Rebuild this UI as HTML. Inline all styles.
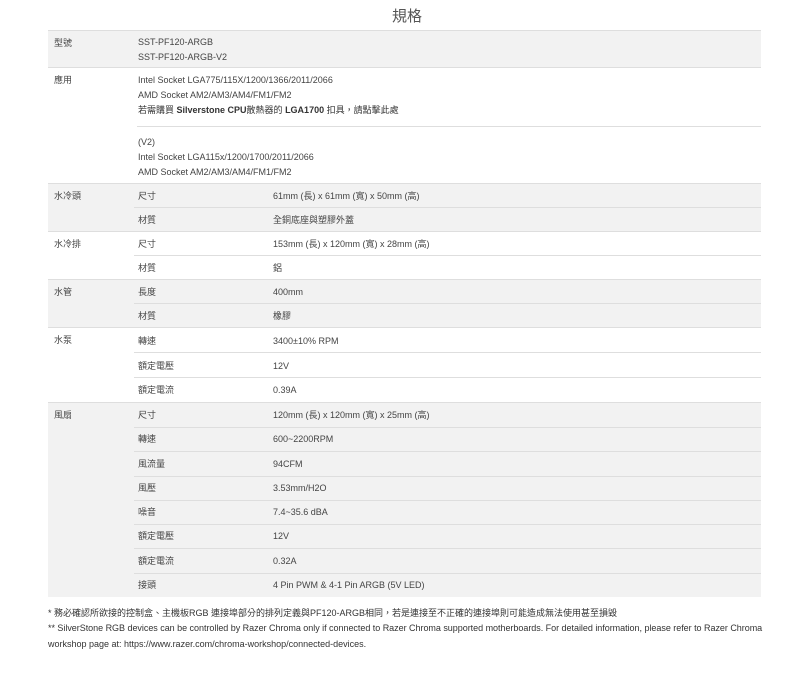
<!DOCTYPE html>
<html><head><meta charset="utf-8">
<style>
*{margin:0;padding:0;box-sizing:border-box}
body{width:800px;height:674px;background:#fff;font-family:"Liberation Sans","Noto Sans CJK TC",sans-serif;color:#444;font-size:9px;position:relative;overflow:hidden}
.a{position:absolute;white-space:nowrap;line-height:11px}
.g{position:absolute;left:48px;width:713px;background:#f2f2f2}
.l{position:absolute;height:1px;background:#dedede}
b{font-weight:bold;color:#333}
</style></head><body>
<div class="a" style="left:392px;top:8px;font-size:15px;line-height:18px;color:#555">規格</div>

<div class="l" style="left:48px;top:30px;width:713px"></div>
<div class="g" style="top:31px;height:36px"></div>
<div class="l" style="left:48px;top:67px;width:713px"></div>
<div class="a" style="left:54px;top:38px">型號</div>
<div class="a" style="left:138px;top:37px">SST-PF120-ARGB</div>
<div class="a" style="left:138px;top:52px">SST-PF120-ARGB-V2</div>

<div class="a" style="left:54px;top:75px">應用</div>
<div class="a" style="left:138px;top:75px">Intel Socket LGA775/115X/1200/1366/2011/2066</div>
<div class="a" style="left:138px;top:90px">AMD Socket AM2/AM3/AM4/FM1/FM2</div>
<div class="a" style="left:138px;top:105px;color:#333">若需購買 <b>Silverstone CPU</b>散熱器的 <b>LGA1700</b> 扣具，請點擊此處</div>
<div class="l" style="left:137px;top:126px;width:624px"></div>
<div class="a" style="left:138px;top:137px">(V2)</div>
<div class="a" style="left:138px;top:152px">Intel Socket LGA115x/1200/1700/2011/2066</div>
<div class="a" style="left:138px;top:167px">AMD Socket AM2/AM3/AM4/FM1/FM2</div>

<div class="l" style="left:48px;top:183px;width:713px"></div>
<div class="g" style="top:184px;height:47px"></div>
<div class="l" style="left:134px;top:207px;width:627px"></div>
<div class="a" style="left:54px;top:191px">水冷頭</div>
<div class="a" style="left:138px;top:191px">尺寸</div><div class="a" style="left:273px;top:191px">61mm (長) x 61mm (寬) x 50mm (高)</div>
<div class="a" style="left:138px;top:215px">材質</div><div class="a" style="left:273px;top:215px">全銅底座與塑膠外蓋</div>

<div class="l" style="left:48px;top:231px;width:713px"></div>
<div class="l" style="left:134px;top:255px;width:627px"></div>
<div class="a" style="left:54px;top:239px">水冷排</div>
<div class="a" style="left:138px;top:239px">尺寸</div><div class="a" style="left:273px;top:239px">153mm (長) x 120mm (寬) x 28mm (高)</div>
<div class="a" style="left:138px;top:263px">材質</div><div class="a" style="left:273px;top:263px">鋁</div>

<div class="l" style="left:48px;top:279px;width:713px"></div>
<div class="g" style="top:280px;height:47px"></div>
<div class="l" style="left:134px;top:303px;width:627px"></div>
<div class="a" style="left:54px;top:287px">水管</div>
<div class="a" style="left:138px;top:287px">長度</div><div class="a" style="left:273px;top:287px">400mm</div>
<div class="a" style="left:138px;top:311px">材質</div><div class="a" style="left:273px;top:311px">橡膠</div>

<div class="l" style="left:48px;top:327px;width:713px"></div>
<div class="l" style="left:134px;top:352px;width:627px"></div>
<div class="l" style="left:134px;top:377px;width:627px"></div>
<div class="a" style="left:54px;top:335px">水泵</div>
<div class="a" style="left:138px;top:336px">轉速</div><div class="a" style="left:273px;top:336px">3400±10% RPM</div>
<div class="a" style="left:138px;top:361px">額定電壓</div><div class="a" style="left:273px;top:361px">12V</div>
<div class="a" style="left:138px;top:385px">額定電流</div><div class="a" style="left:273px;top:385px">0.39A</div>

<div class="l" style="left:48px;top:402px;width:713px"></div>
<div class="g" style="top:403px;height:194px"></div>
<div class="l" style="left:134px;top:427px;width:627px"></div>
<div class="l" style="left:134px;top:451px;width:627px"></div>
<div class="l" style="left:134px;top:476px;width:627px"></div>
<div class="l" style="left:134px;top:500px;width:627px"></div>
<div class="l" style="left:134px;top:524px;width:627px"></div>
<div class="l" style="left:134px;top:548px;width:627px"></div>
<div class="l" style="left:134px;top:573px;width:627px"></div>
<div class="a" style="left:54px;top:410px">風扇</div>
<div class="a" style="left:138px;top:410px">尺寸</div><div class="a" style="left:273px;top:410px">120mm (長) x 120mm (寬) x 25mm (高)</div>
<div class="a" style="left:138px;top:434px">轉速</div><div class="a" style="left:273px;top:434px">600~2200RPM</div>
<div class="a" style="left:138px;top:459px">風流量</div><div class="a" style="left:273px;top:459px">94CFM</div>
<div class="a" style="left:138px;top:483px">風壓</div><div class="a" style="left:273px;top:483px">3.53mm/H2O</div>
<div class="a" style="left:138px;top:507px">噪音</div><div class="a" style="left:273px;top:507px">7.4~35.6 dBA</div>
<div class="a" style="left:138px;top:531px">額定電壓</div><div class="a" style="left:273px;top:531px">12V</div>
<div class="a" style="left:138px;top:556px">額定電流</div><div class="a" style="left:273px;top:556px">0.32A</div>
<div class="a" style="left:138px;top:580px">接頭</div><div class="a" style="left:273px;top:580px">4 Pin PWM &amp; 4-1 Pin ARGB (5V LED)</div>

<div class="a" style="left:48px;top:608px;color:#333">* 務必確認所欲接的控制盒、主機板RGB 連接埠部分的排列定義與PF120-ARGB相同，若是連接至不正確的連接埠則可能造成無法使用甚至損毀</div>
<div style="position:absolute;left:48px;top:623px;width:713px;line-height:11px;color:#333;white-space:nowrap;letter-spacing:-0.03px">** SilverStone RGB devices can be controlled by Razer Chroma only if connected to Razer Chroma supported motherboards. For detailed information, please refer to Razer Chroma</div>
<div class="a" style="left:48px;top:639px;color:#333">workshop page at: https://www.razer.com/chroma-workshop/connected-devices.</div>
</body></html>
